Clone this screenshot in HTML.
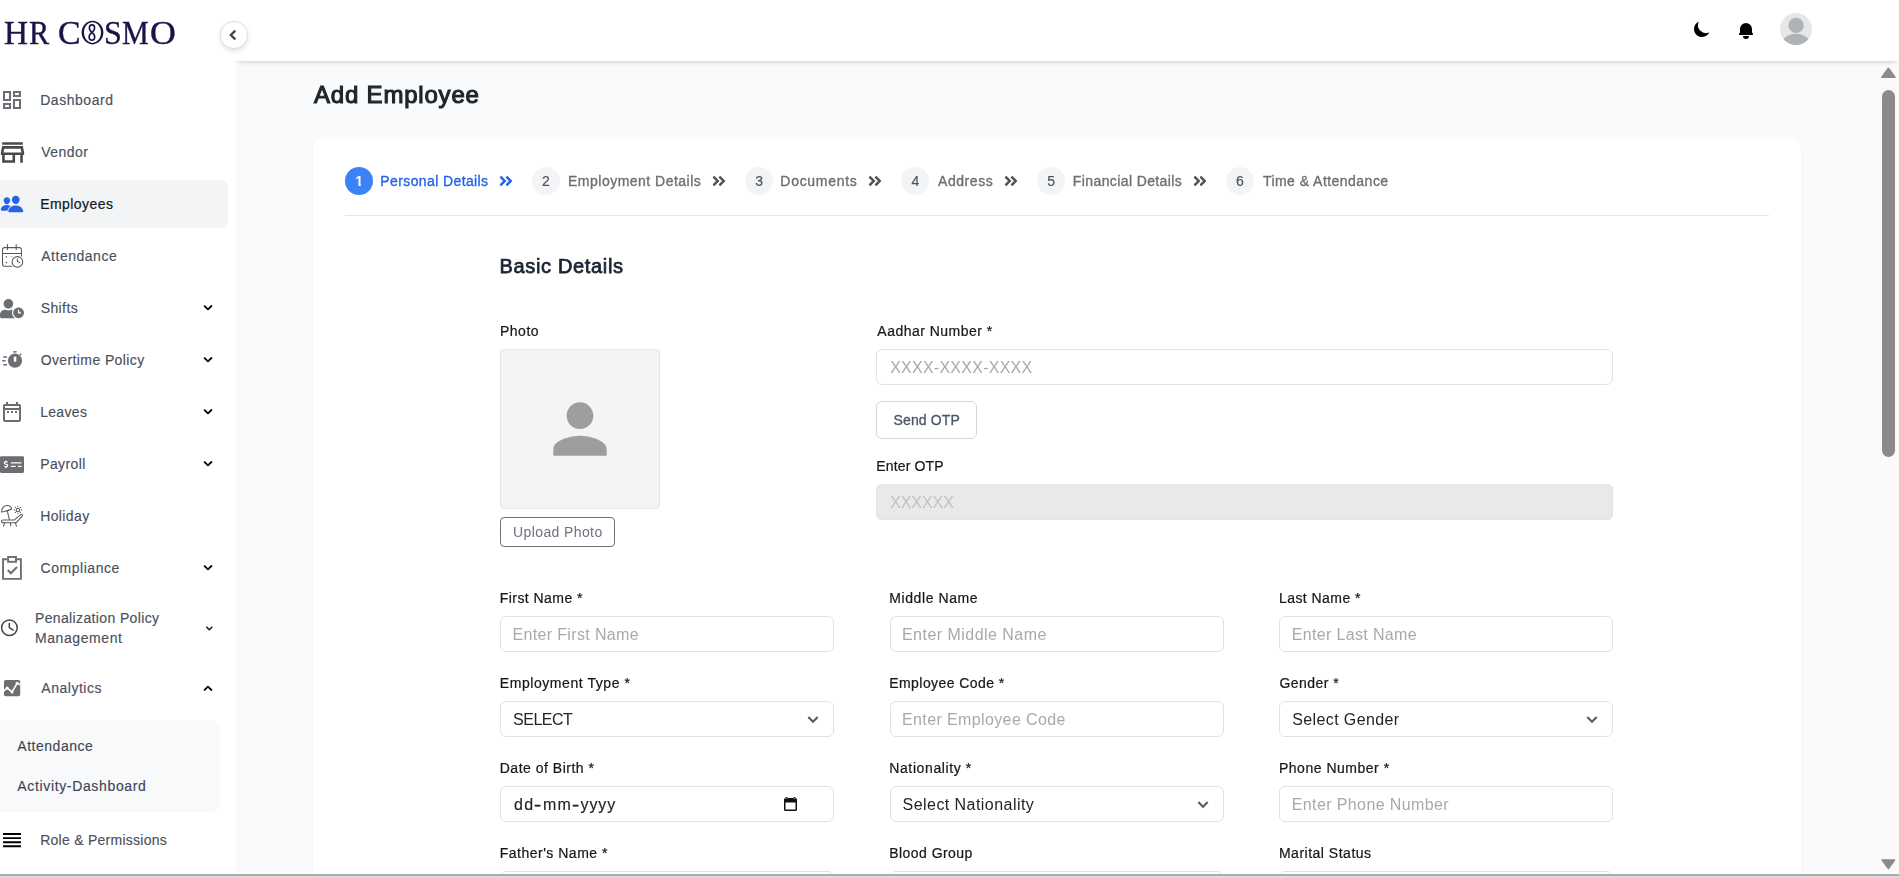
<!DOCTYPE html>
<html lang="en">
<head>
<meta charset="utf-8">
<title>Add Employee - HR Cosmo</title>
<style>
*{box-sizing:border-box;margin:0;padding:0}
html,body{width:1899px;height:878px;overflow:hidden;background:#fff}
body{font-family:"Liberation Sans",sans-serif;position:relative}
#app{position:absolute;left:0;top:0;width:1899px;height:878px;overflow:hidden;background:#fff}
.t{position:absolute;white-space:nowrap;display:block}
.abs{position:absolute}
svg{position:absolute;overflow:visible}
main{position:absolute;left:236px;top:0;width:1663px;height:873px;background:#f9fafb}
header{position:absolute;left:236px;top:0;width:1663px;height:61px;background:#fff;box-shadow:0 3px 5px -2px rgba(0,0,0,.15),0 2px 8px -4px rgba(0,0,0,.10)}
aside{position:absolute;left:0;top:0;width:236px;height:873px;background:#fff}
.card{position:absolute;left:313px;top:139px;width:1488px;height:760px;background:#fff;border-radius:8px;box-shadow:0 1px 3px rgba(0,0,0,.05)}
.navact{position:absolute;left:-10px;top:180px;width:238px;height:48px;background:#f3f4f6;border-radius:8px}
.submenu{position:absolute;left:-10px;top:720px;width:229.5px;height:92px;background:#f8f9fa;border-radius:9px}
.inp{position:absolute;height:36px;border:1px solid #dee2e6;border-radius:6px;background:#fff}
.stepc{position:absolute;width:28px;height:28px;border-radius:50%;top:167px;background:#f3f4f6}
.btn{position:absolute;border-radius:6px;background:#fff}
</style>
</head>
<body>
<div id="app">

<main></main>
<div id="content" style="position:absolute;left:0;top:0;width:1899px;height:873px;will-change:transform">
<section class="card"></section>
<span class="t" style="left:314.05px;top:81px;font-size:24px;line-height:27px;font-weight:400;color:#212529;letter-spacing:0.793px;-webkit-text-stroke:1.1px currentColor;">Add Employee</span>
<nav aria-label="steps">
<div class="stepc" style="left:345px;background:#3b82f6"></div>
<span class="t" style="left:355.32px;top:173px;font-size:14px;line-height:16px;font-weight:700;color:#fff;letter-spacing:0.000px;clip-path:polygon(0 0,100% 0,100% 10.600px,5.500px 10.600px,5.500px 100%,3.100px 100%,3.100px 10.600px,0 10.600px);">1</span>
<span class="t" style="left:380.35px;top:173px;font-size:14px;line-height:16px;font-weight:400;color:#2563eb;letter-spacing:0.388px;-webkit-text-stroke:0.35px currentColor;">Personal Details</span>
<svg style="left:499.0px;top:173px" width="14" height="16" viewBox="0 0 448 512"><path fill="#2563eb" d="M224.300 273l-136 136c-9.400 9.400-24.600 9.400-33.900 0l-22.600-22.600c-9.400-9.400-9.400-24.600 0-33.900l96.400-96.400-96.400-96.400c-9.400-9.400-9.400-24.600 0-33.900L54.300 103c9.400-9.400 24.600-9.400 33.900 0l136 136c9.500 9.400 9.500 24.600.1 34zm192-34l-136-136c-9.400-9.400-24.600-9.400-33.900 0l-22.600 22.600c-9.400 9.400-9.400 24.600 0 33.900l96.400 96.400-96.400 96.400c-9.400 9.400-9.400 24.600 0 33.900l22.600 22.600c9.400 9.400 24.600 9.400 33.900 0l136-136c9.400-9.200 9.400-24.400 0-33.800z"/></svg>
<div class="stepc" style="left:532px;"></div>
<span class="t" style="left:542.10px;top:173px;font-size:14px;line-height:16px;font-weight:400;color:#50545b;letter-spacing:0.000px;-webkit-text-stroke:0.2px currentColor;">2</span>
<span class="t" style="left:568.05px;top:173px;font-size:14px;line-height:16px;font-weight:400;color:#6d7076;letter-spacing:0.486px;-webkit-text-stroke:0.35px currentColor;">Employment Details</span>
<svg style="left:711.7px;top:173px" width="14" height="16" viewBox="0 0 448 512"><path fill="#50545b" d="M224.300 273l-136 136c-9.400 9.400-24.600 9.400-33.900 0l-22.600-22.600c-9.400-9.400-9.400-24.600 0-33.900l96.400-96.400-96.400-96.400c-9.400-9.400-9.400-24.600 0-33.900L54.300 103c9.400-9.400 24.600-9.400 33.900 0l136 136c9.500 9.400 9.500 24.600.1 34zm192-34l-136-136c-9.400-9.400-24.600-9.400-33.900 0l-22.600 22.600c-9.400 9.400-9.400 24.600 0 33.900l96.400 96.400-96.400 96.400c-9.400 9.400-9.400 24.600 0 33.900l22.600 22.600c9.400 9.400 24.600 9.400 33.900 0l136-136c9.400-9.200 9.400-24.400 0-33.800z"/></svg>
<div class="stepc" style="left:745px;"></div>
<span class="t" style="left:755.27px;top:173px;font-size:14px;line-height:16px;font-weight:400;color:#50545b;letter-spacing:0.000px;-webkit-text-stroke:0.2px currentColor;">3</span>
<span class="t" style="left:780.35px;top:173px;font-size:14px;line-height:16px;font-weight:400;color:#6d7076;letter-spacing:0.706px;-webkit-text-stroke:0.35px currentColor;">Documents</span>
<svg style="left:867.7px;top:173px" width="14" height="16" viewBox="0 0 448 512"><path fill="#50545b" d="M224.300 273l-136 136c-9.400 9.400-24.600 9.400-33.900 0l-22.600-22.600c-9.400-9.400-9.400-24.600 0-33.900l96.400-96.400-96.400-96.400c-9.400-9.400-9.400-24.600 0-33.900L54.300 103c9.400-9.400 24.600-9.400 33.900 0l136 136c9.500 9.400 9.500 24.600.1 34zm192-34l-136-136c-9.400-9.400-24.600-9.400-33.900 0l-22.600 22.600c-9.400 9.400-9.400 24.600 0 33.900l96.400 96.400-96.400 96.400c-9.400 9.400-9.400 24.600 0 33.900l22.600 22.600c9.400 9.400 24.600 9.400 33.900 0l136-136c9.400-9.200 9.400-24.400 0-33.800z"/></svg>
<div class="stepc" style="left:901px;"></div>
<span class="t" style="left:911.48px;top:173px;font-size:14px;line-height:16px;font-weight:400;color:#50545b;letter-spacing:0.000px;-webkit-text-stroke:0.2px currentColor;">4</span>
<span class="t" style="left:938.07px;top:173px;font-size:14px;line-height:16px;font-weight:400;color:#6d7076;letter-spacing:0.546px;-webkit-text-stroke:0.35px currentColor;">Address</span>
<svg style="left:1003.6px;top:173px" width="14" height="16" viewBox="0 0 448 512"><path fill="#50545b" d="M224.300 273l-136 136c-9.400 9.400-24.600 9.400-33.900 0l-22.600-22.600c-9.400-9.400-9.400-24.600 0-33.900l96.400-96.400-96.400-96.400c-9.400-9.400-9.400-24.600 0-33.900L54.300 103c9.400-9.400 24.600-9.400 33.900 0l136 136c9.500 9.400 9.500 24.600.1 34zm192-34l-136-136c-9.400-9.400-24.600-9.400-33.900 0l-22.600 22.600c-9.400 9.400-9.400 24.600 0 33.900l96.400 96.400-96.400 96.400c-9.400 9.400-9.400 24.600 0 33.900l22.600 22.600c9.400 9.400 24.600 9.400 33.900 0l136-136c9.400-9.200 9.400-24.400 0-33.800z"/></svg>
<div class="stepc" style="left:1037px;"></div>
<span class="t" style="left:1047.24px;top:173px;font-size:14px;line-height:16px;font-weight:400;color:#50545b;letter-spacing:0.000px;-webkit-text-stroke:0.2px currentColor;">5</span>
<span class="t" style="left:1072.85px;top:173px;font-size:14px;line-height:16px;font-weight:400;color:#6d7076;letter-spacing:0.390px;-webkit-text-stroke:0.35px currentColor;">Financial Details</span>
<svg style="left:1192.7px;top:173px" width="14" height="16" viewBox="0 0 448 512"><path fill="#50545b" d="M224.300 273l-136 136c-9.400 9.400-24.600 9.400-33.900 0l-22.600-22.600c-9.400-9.400-9.400-24.600 0-33.900l96.400-96.400-96.400-96.400c-9.400-9.400-9.400-24.600 0-33.900L54.300 103c9.400-9.400 24.600-9.400 33.900 0l136 136c9.500 9.400 9.500 24.600.1 34zm192-34l-136-136c-9.400-9.400-24.600-9.400-33.900 0l-22.600 22.600c-9.400 9.400-9.400 24.600 0 33.900l96.400 96.400-96.400 96.400c-9.400 9.400-9.400 24.600 0 33.900l22.600 22.600c9.400 9.400 24.600 9.400 33.900 0l136-136c9.400-9.200 9.400-24.400 0-33.800z"/></svg>
<div class="stepc" style="left:1226px;"></div>
<span class="t" style="left:1236.09px;top:173px;font-size:14px;line-height:16px;font-weight:400;color:#50545b;letter-spacing:0.000px;-webkit-text-stroke:0.2px currentColor;">6</span>
<span class="t" style="left:1262.89px;top:173px;font-size:14px;line-height:16px;font-weight:400;color:#6d7076;letter-spacing:0.468px;-webkit-text-stroke:0.35px currentColor;">Time &amp; Attendance</span>
</nav>
<div class="abs" style="left:345px;top:214.5px;width:1424px;height:1px;background:#e3e6ef"></div>
<span class="t" style="left:499.56px;top:255px;font-size:20px;line-height:22px;font-weight:400;color:#1b2434;letter-spacing:0.656px;-webkit-text-stroke:0.75px currentColor;">Basic Details</span>
<span class="t" style="left:499.95px;top:323px;font-size:14px;line-height:16px;font-weight:400;color:#16181d;letter-spacing:0.513px;-webkit-text-stroke:0.22px currentColor;">Photo</span>
<div class="abs" style="left:500px;top:349px;width:160px;height:160px;background:#f3f4f6;border:1px solid #e5e7eb;border-radius:4px"></div>
<svg style="left:540px;top:388.7px" width="80" height="80" viewBox="0 0 24 24"><path fill="#9e9e9e" d="M12 12c2.210 0 4-1.790 4-4s-1.790-4-4-4-4 1.790-4 4 1.790 4 4 4zm0 2c-2.670 0-8 1.340-8 4v2h16v-2c0-2.660-5.330-4-8-4z"/></svg>
<div class="btn" style="left:500px;top:517px;width:115px;height:30px;border:1px solid #6c7078;border-radius:4px"></div>
<span class="t" style="left:513.02px;top:524px;font-size:14px;line-height:16px;font-weight:400;color:#6b7280;letter-spacing:0.393px;">Upload Photo</span>
<span class="t" style="left:877.37px;top:323px;font-size:14px;line-height:16px;font-weight:400;color:#16181d;letter-spacing:0.477px;-webkit-text-stroke:0.22px currentColor;">Aadhar Number *</span>
<div class="inp" style="left:876px;top:349px;width:737px"></div>
<span class="t" style="left:890.14px;top:359px;font-size:16px;line-height:17px;font-weight:400;color:#a7a9ac;letter-spacing:0.260px;">XXXX-XXXX-XXXX</span>
<div class="btn" style="left:876px;top:401px;width:101px;height:38px;border:1px solid #d1d5db"></div>
<span class="t" style="left:893.56px;top:412px;font-size:14px;line-height:16px;font-weight:400;color:#4b5563;letter-spacing:0.130px;-webkit-text-stroke:0.3px currentColor;">Send OTP</span>
<span class="t" style="left:876.25px;top:458px;font-size:14px;line-height:16px;font-weight:400;color:#16181d;letter-spacing:0.144px;-webkit-text-stroke:0.22px currentColor;">Enter OTP</span>
<div class="inp" style="left:876px;top:484px;width:737px;height:36px;background:#e9e9e9;border-color:#e4e4e4;border-radius:5px"></div>
<span class="t" style="left:890.14px;top:494px;font-size:16px;line-height:17px;font-weight:400;color:#c2c2c2;letter-spacing:-0.047px;">XXXXXX</span>
<span class="t" style="left:499.75px;top:590px;font-size:14px;line-height:16px;font-weight:400;color:#16181d;letter-spacing:0.444px;-webkit-text-stroke:0.22px currentColor;">First Name *</span>
<div class="inp" style="left:500px;top:616px;width:334px"></div>
<span class="t" style="left:512.49px;top:626px;font-size:16px;line-height:17px;font-weight:400;color:#a7a9ac;letter-spacing:0.347px;">Enter First Name</span>
<span class="t" style="left:889.25px;top:590px;font-size:14px;line-height:16px;font-weight:400;color:#16181d;letter-spacing:0.589px;-webkit-text-stroke:0.22px currentColor;">Middle Name</span>
<div class="inp" style="left:889.5px;top:616px;width:334px"></div>
<span class="t" style="left:901.99px;top:626px;font-size:16px;line-height:17px;font-weight:400;color:#a7a9ac;letter-spacing:0.467px;">Enter Middle Name</span>
<span class="t" style="left:1278.95px;top:590px;font-size:14px;line-height:16px;font-weight:400;color:#16181d;letter-spacing:0.443px;-webkit-text-stroke:0.22px currentColor;">Last Name *</span>
<div class="inp" style="left:1279.2px;top:616px;width:334px"></div>
<span class="t" style="left:1291.69px;top:626px;font-size:16px;line-height:17px;font-weight:400;color:#a7a9ac;letter-spacing:0.348px;">Enter Last Name</span>
<span class="t" style="left:499.75px;top:675px;font-size:14px;line-height:16px;font-weight:400;color:#16181d;letter-spacing:0.568px;-webkit-text-stroke:0.22px currentColor;">Employment Type *</span>
<div class="inp" style="left:500px;top:701px;width:334px"></div>
<span class="t" style="left:513.07px;top:711px;font-size:16px;line-height:17px;font-weight:400;color:#212529;letter-spacing:-0.510px;">SELECT</span>
<svg style="left:807px;top:715.2px" width="12" height="9" viewBox="0 0 12 9"><path d="M1.300 1.900l4.700 4.900 4.700-4.900" fill="none" stroke="#565d6b" stroke-width="2.100" stroke-linecap="butt" stroke-linejoin="miter"/></svg>
<span class="t" style="left:889.25px;top:675px;font-size:14px;line-height:16px;font-weight:400;color:#16181d;letter-spacing:0.437px;-webkit-text-stroke:0.22px currentColor;">Employee Code *</span>
<div class="inp" style="left:889.5px;top:701px;width:334px"></div>
<span class="t" style="left:901.99px;top:711px;font-size:16px;line-height:17px;font-weight:400;color:#a7a9ac;letter-spacing:0.383px;">Enter Employee Code</span>
<span class="t" style="left:1279.40px;top:675px;font-size:14px;line-height:16px;font-weight:400;color:#16181d;letter-spacing:0.456px;-webkit-text-stroke:0.22px currentColor;">Gender *</span>
<div class="inp" style="left:1279.2px;top:701px;width:334px"></div>
<span class="t" style="left:1292.27px;top:711px;font-size:16px;line-height:17px;font-weight:400;color:#212529;letter-spacing:0.384px;">Select Gender</span>
<svg style="left:1586.2px;top:715.2px" width="12" height="9" viewBox="0 0 12 9"><path d="M1.300 1.900l4.700 4.900 4.700-4.900" fill="none" stroke="#565d6b" stroke-width="2.100" stroke-linecap="butt" stroke-linejoin="miter"/></svg>
<span class="t" style="left:499.75px;top:760px;font-size:14px;line-height:16px;font-weight:400;color:#16181d;letter-spacing:0.508px;-webkit-text-stroke:0.22px currentColor;">Date of Birth *</span>
<div class="inp" style="left:500px;top:786px;width:334px"></div>
<div class="datetext">
<span class="t" style="left:513.93px;top:796px;font-size:16px;line-height:17px;font-weight:400;color:#212529;letter-spacing:1.406px;-webkit-text-stroke:0.15px currentColor;">dd</span>
<span class="t" style="left:534.45px;top:796px;font-size:16px;line-height:17px;font-weight:400;color:#212529;letter-spacing:0.000px;-webkit-text-stroke:0.45px currentColor;transform:scaleX(1.3312);transform-origin:0 0;">-</span>
<span class="t" style="left:542.94px;top:796px;font-size:16px;line-height:17px;font-weight:400;color:#212529;letter-spacing:1.161px;-webkit-text-stroke:0.15px currentColor;">mm</span>
<span class="t" style="left:571.75px;top:796px;font-size:16px;line-height:17px;font-weight:400;color:#212529;letter-spacing:0.000px;-webkit-text-stroke:0.45px currentColor;transform:scaleX(1.3312);transform-origin:0 0;">-</span>
<span class="t" style="left:580.56px;top:796px;font-size:16px;line-height:17px;font-weight:400;color:#212529;letter-spacing:0.890px;-webkit-text-stroke:0.15px currentColor;">yyyy</span>
</div>
<svg style="left:784.4px;top:796.8px" width="13" height="14" viewBox="0 0 13 14"><path d="M1.500 1h10a1.500 1.500 0 0 1 1.500 1.500v10a1.500 1.500 0 0 1-1.500 1.500h-10a1.500 1.500 0 0 1-1.500-1.500v-10a1.500 1.500 0 0 1 1.500-1.500zM1.500 5.400v7.100h10V5.400zM1.700 0h1.700v1.500H1.700zM9.600 0h1.700v1.500H9.600z" fill="#111" fill-rule="evenodd"/></svg>
<span class="t" style="left:889.25px;top:760px;font-size:14px;line-height:16px;font-weight:400;color:#16181d;letter-spacing:0.614px;-webkit-text-stroke:0.22px currentColor;">Nationality *</span>
<div class="inp" style="left:889.5px;top:786px;width:334px"></div>
<span class="t" style="left:902.57px;top:796px;font-size:16px;line-height:17px;font-weight:400;color:#212529;letter-spacing:0.449px;">Select Nationality</span>
<svg style="left:1196.5px;top:800.2px" width="12" height="9" viewBox="0 0 12 9"><path d="M1.300 1.900l4.700 4.900 4.700-4.900" fill="none" stroke="#565d6b" stroke-width="2.100" stroke-linecap="butt" stroke-linejoin="miter"/></svg>
<span class="t" style="left:1278.95px;top:760px;font-size:14px;line-height:16px;font-weight:400;color:#16181d;letter-spacing:0.513px;-webkit-text-stroke:0.22px currentColor;">Phone Number *</span>
<div class="inp" style="left:1279.2px;top:786px;width:334px"></div>
<span class="t" style="left:1291.69px;top:796px;font-size:16px;line-height:17px;font-weight:400;color:#a7a9ac;letter-spacing:0.393px;">Enter Phone Number</span>
<span class="t" style="left:499.75px;top:845px;font-size:14px;line-height:16px;font-weight:400;color:#16181d;letter-spacing:0.497px;-webkit-text-stroke:0.22px currentColor;">Father&#x27;s Name *</span>
<div class="inp" style="left:500px;top:871px;width:334px"></div>
<span class="t" style="left:889.25px;top:845px;font-size:14px;line-height:16px;font-weight:400;color:#16181d;letter-spacing:0.453px;-webkit-text-stroke:0.22px currentColor;">Blood Group</span>
<div class="inp" style="left:889.5px;top:871px;width:334px"></div>
<span class="t" style="left:1278.95px;top:845px;font-size:14px;line-height:16px;font-weight:400;color:#16181d;letter-spacing:0.505px;-webkit-text-stroke:0.22px currentColor;">Marital Status</span>
<div class="inp" style="left:1279.2px;top:871px;width:334px"></div>
</div>
<div class="abs" style="left:1877px;top:61px;width:22px;height:812px;background:#fafafb"></div>
<svg style="left:1880px;top:66px" width="17" height="13" viewBox="0 0 17 13"><path d="M8.400 2.300L14.900 11.300H1.900z" fill="#8b8b8b" stroke="#8b8b8b" stroke-width="1.6" stroke-linejoin="round"/></svg>
<div class="abs" style="left:1882px;top:90px;width:13px;height:367px;border-radius:6.5px;background:#8b8b8b"></div>
<svg style="left:1880px;top:858px" width="17" height="13" viewBox="0 0 17 13"><path d="M2.200 2L14.600 2L8.400 10.400z" fill="#8b8b8b" stroke="#8b8b8b" stroke-width="1.6" stroke-linejoin="round"/></svg>
<header></header>
<svg style="left:1691.900px;top:19.150px" width="20" height="20" viewBox="0 0 20 20"><path fill="#000" d="M17.293 13.293A8 8 0 016.707 2.707a8.001 8.001 0 1010.586 10.586z"/></svg>
<svg style="left:1736px;top:20.950px" width="20" height="20" viewBox="0 0 20 20"><path fill="#000" d="M10 2a6 6 0 00-6 6v3.586l-.707.707A1 1 0 004 14h12a1 1 0 00.707-1.707L16 11.586V8a6 6 0 00-6-6zM10 18a3 3 0 01-3-3h6a3 3 0 01-3 3z"/></svg>
<svg style="left:1780px;top:13px" width="32" height="32" viewBox="0 0 32 32"><defs><clipPath id="av"><circle cx="16" cy="16" r="16"/></clipPath></defs><circle cx="16" cy="16" r="16" fill="#e5e6e8"/><g clip-path="url(#av)" fill="#aeb3b7"><circle cx="16.100" cy="12.400" r="7.700"/><ellipse cx="16" cy="33" rx="15" ry="12.200"/></g></svg>
<aside></aside>
<div class="navact"></div>
<div class="submenu"></div>
<div id="logo" role="img" aria-label="HR COSMO" title="HR COSMO" style="position:absolute;left:0;top:0;width:200px;height:60px;will-change:transform;font-size:0">
<span class="t" style="left:3.64px;top:14px;font-size:33.6px;line-height:37px;font-weight:400;color:#1a1446;letter-spacing:0.000px;font-family:'Liberation Serif',serif;-webkit-text-stroke:0.4px #1a1446;transform:scaleX(0.9912);transform-origin:0 0;">H</span>
<span class="t" style="left:28.63px;top:14px;font-size:33.6px;line-height:37px;font-weight:400;color:#1a1446;letter-spacing:0.000px;font-family:'Liberation Serif',serif;-webkit-text-stroke:0.4px #1a1446;transform:scaleX(0.9027);transform-origin:0 0;">R</span> 
<span class="t" style="left:58.01px;top:14px;font-size:33.6px;line-height:37px;font-weight:400;color:#1a1446;letter-spacing:0.000px;font-family:'Liberation Serif',serif;-webkit-text-stroke:0.4px #1a1446;transform:scaleX(1.0071);transform-origin:0 0;">C</span>
<span class="t" style="left:104.25px;top:14px;font-size:33.6px;line-height:37px;font-weight:400;color:#1a1446;letter-spacing:0.000px;font-family:'Liberation Serif',serif;-webkit-text-stroke:0.4px #1a1446;transform:scaleX(0.9551);transform-origin:0 0;">S</span>
<span class="t" style="left:121.93px;top:14px;font-size:33.6px;line-height:37px;font-weight:400;color:#1a1446;letter-spacing:0.000px;font-family:'Liberation Serif',serif;-webkit-text-stroke:0.4px #1a1446;transform:scaleX(0.8959);transform-origin:0 0;">M</span>
<span class="t" style="left:149.83px;top:14px;font-size:33.6px;line-height:37px;font-weight:400;color:#1a1446;letter-spacing:0.000px;font-family:'Liberation Serif',serif;-webkit-text-stroke:0.4px #1a1446;transform:scaleX(1.0655);transform-origin:0 0;">O</span>
<svg style="left:80px;top:20px" width="25" height="26" viewBox="0 0 25 26"><path fill="#1a1446" fill-rule="evenodd" d="M12.500 0.800c6 0 10.900 5.300 10.900 11.800s-4.900 11.800-10.900 11.800S1.600 19.100 1.600 12.600 6.500 0.800 12.500 0.800zm0 1.500c-4.700 0-8.500 4.600-8.500 10.300s3.800 10.300 8.500 10.300 8.500-4.600 8.500-10.300S17.200 2.300 12.500 2.300z"/><path d="M11.900 12.400C8.100 9.700 8.900 4.900 12 4.900c3.100 0 3.800 4.700-.1 7.500-3.900 2.800-3.500 7.800 0 7.800 3.600 0 3.900-5 0-7.800z" fill="none" stroke="#1a1446" stroke-width="1.600"/></svg>
</div>
<div class="abs" style="left:220px;top:21px;width:28px;height:28px;border-radius:50%;background:#fff;border:1px solid #dcdfe3;box-shadow:0 2px 5px rgba(0,0,0,.12)"></div>
<svg style="left:228px;top:29px" width="10" height="12" viewBox="0 0 10 12"><path d="M6.600 2.300L2.700 6l3.900 3.700" fill="none" stroke="#3f444a" stroke-width="2.400" stroke-linecap="round" stroke-linejoin="round"/></svg>
<nav aria-label="sidebar">
<span class="t" style="left:40.15px;top:92px;font-size:14px;line-height:16px;font-weight:400;color:#4a505c;letter-spacing:0.545px;-webkit-text-stroke:0.15px currentColor;">Dashboard</span>
<span class="t" style="left:41.24px;top:144px;font-size:14px;line-height:16px;font-weight:400;color:#4a505c;letter-spacing:0.484px;-webkit-text-stroke:0.15px currentColor;">Vendor</span>
<span class="t" style="left:40.15px;top:196px;font-size:14px;line-height:16px;font-weight:400;color:#111827;letter-spacing:0.437px;-webkit-text-stroke:0.2px currentColor;">Employees</span>
<span class="t" style="left:41.27px;top:248px;font-size:14px;line-height:16px;font-weight:400;color:#4a505c;letter-spacing:0.513px;-webkit-text-stroke:0.15px currentColor;">Attendance</span>
<span class="t" style="left:40.66px;top:300px;font-size:14px;line-height:16px;font-weight:400;color:#4a505c;letter-spacing:0.406px;-webkit-text-stroke:0.15px currentColor;">Shifts</span>
<span class="t" style="left:40.64px;top:352px;font-size:14px;line-height:16px;font-weight:400;color:#4a505c;letter-spacing:0.398px;-webkit-text-stroke:0.15px currentColor;">Overtime Policy</span>
<span class="t" style="left:40.15px;top:404px;font-size:14px;line-height:16px;font-weight:400;color:#4a505c;letter-spacing:0.322px;-webkit-text-stroke:0.15px currentColor;">Leaves</span>
<span class="t" style="left:40.15px;top:456px;font-size:14px;line-height:16px;font-weight:400;color:#4a505c;letter-spacing:0.399px;-webkit-text-stroke:0.15px currentColor;">Payroll</span>
<span class="t" style="left:40.15px;top:508px;font-size:14px;line-height:16px;font-weight:400;color:#4a505c;letter-spacing:0.398px;-webkit-text-stroke:0.15px currentColor;">Holiday</span>
<span class="t" style="left:40.59px;top:560px;font-size:14px;line-height:16px;font-weight:400;color:#4a505c;letter-spacing:0.534px;-webkit-text-stroke:0.15px currentColor;">Compliance</span>
<span class="t" style="left:34.95px;top:610px;font-size:14px;line-height:16px;font-weight:400;color:#4a505c;letter-spacing:0.370px;-webkit-text-stroke:0.15px currentColor;">Penalization Policy</span>
<span class="t" style="left:34.95px;top:630px;font-size:14px;line-height:16px;font-weight:400;color:#4a505c;letter-spacing:0.582px;-webkit-text-stroke:0.15px currentColor;">Management</span>
<span class="t" style="left:41.27px;top:680px;font-size:14px;line-height:16px;font-weight:400;color:#4a505c;letter-spacing:0.527px;-webkit-text-stroke:0.15px currentColor;">Analytics</span>
<span class="t" style="left:17.27px;top:738px;font-size:14px;line-height:16px;font-weight:400;color:#3f4654;letter-spacing:0.524px;-webkit-text-stroke:0.15px currentColor;">Attendance</span>
<span class="t" style="left:17.27px;top:778px;font-size:14px;line-height:16px;font-weight:400;color:#3f4654;letter-spacing:0.655px;-webkit-text-stroke:0.15px currentColor;">Activity-Dashboard</span>
<span class="t" style="left:40.15px;top:832px;font-size:14px;line-height:16px;font-weight:400;color:#4a505c;letter-spacing:0.265px;-webkit-text-stroke:0.15px currentColor;">Role &amp; Permissions</span>
</nav>
<svg style="left:203px;top:304px" width="10" height="8" viewBox="0 0 10 8"><path d="M1.600 2.100l3.350 3.200L8.400 2" fill="none" stroke="#000" stroke-width="1.800" stroke-linecap="round" stroke-linejoin="round"/></svg>
<svg style="left:203px;top:356px" width="10" height="8" viewBox="0 0 10 8"><path d="M1.600 2.100l3.350 3.200L8.400 2" fill="none" stroke="#000" stroke-width="1.800" stroke-linecap="round" stroke-linejoin="round"/></svg>
<svg style="left:203px;top:408px" width="10" height="8" viewBox="0 0 10 8"><path d="M1.600 2.100l3.350 3.200L8.400 2" fill="none" stroke="#000" stroke-width="1.800" stroke-linecap="round" stroke-linejoin="round"/></svg>
<svg style="left:203px;top:460px" width="10" height="8" viewBox="0 0 10 8"><path d="M1.600 2.100l3.350 3.200L8.400 2" fill="none" stroke="#000" stroke-width="1.800" stroke-linecap="round" stroke-linejoin="round"/></svg>
<svg style="left:203px;top:564px" width="10" height="8" viewBox="0 0 10 8"><path d="M1.600 2.100l3.350 3.200L8.400 2" fill="none" stroke="#000" stroke-width="1.800" stroke-linecap="round" stroke-linejoin="round"/></svg>
<svg style="left:204.500px;top:624.500px" width="9" height="7" viewBox="0 0 9 7"><path d="M1.300 1.800l3 2.900 3-2.900" fill="none" stroke="#111" stroke-width="1.400"/></svg>
<svg style="left:203px;top:684px" width="10" height="8" viewBox="0 0 10 8"><path d="M1.600 5.900l3.350-3.200L8.400 6" fill="none" stroke="#000" stroke-width="1.800" stroke-linecap="round" stroke-linejoin="round"/></svg>
<svg style="left:0;top:88px" width="24" height="24" viewBox="0 0 24 24"><path fill="#6b6e73" d="M19 5v2h-4V5h4M9 5v6H5V5h4m10 8v6h-4v-6h4M9 17v2H5v-2h4M21 3h-8v6h8V3zM11 3H3v10h8V3zm10 8h-8v10h8V11zm-10 4H3v6h8v-6z"/></svg>
<svg style="left:-3.300px;top:136.600px" width="31" height="31" viewBox="0 0 24 24"><path fill="#4a4a4a" d="M18.360 9l.6 3H5.040l.6-3h12.720M20 4H4v2h16V4zm0 3H4l-1 5v2h1v6h10v-6h4v6h2v-6h1v-2l-1-5zM6 18v-4h6v4H6z"/></svg>
<svg style="left:0;top:192px" width="24" height="24" viewBox="0 0 512 512"><path fill="#2563eb" d="M336 256c-20.560 0-40.440-9.180-56-25.840-15.130-16.250-24.370-37.920-26-61-1.740-24.620 5.770-47.260 21.140-63.760S312 80 336 80c23.830 0 45.380 9.060 60.700 25.520 15.470 16.620 23 39.220 21.260 63.630-1.670 23.110-10.900 44.770-26 61C376.440 246.820 356.570 256 336 256zm131.830 176H204.180a27.710 27.710 0 0 1-22-10.670 30.220 30.220 0 0 1-5.260-25.790c8.420-33.810 29.280-61.850 60.320-81.080C264.790 297.400 299.860 288 336 288c36.850 0 71 9 98.710 26.050 31.110 19.130 52 47.330 60.380 81.550a30.270 30.270 0 0 1-5.320 25.780A27.680 27.680 0 0 1 467.830 432zM147 260c-35.190 0-66.130-32.720-69-72.930-1.420-20.600 5-39.650 18-53.620 12.860-13.830 31-21.450 51-21.450s38 7.660 50.930 21.570c13.100 14.080 19.500 33.090 18 53.520-2.870 40.200-33.800 72.910-68.930 72.910zm65.660 31.450c-17.590-8.600-40.420-12.900-65.650-12.900-29.460 0-58.070 7.680-80.570 21.620-25.510 15.830-42.670 38.880-49.600 66.710a27.390 27.390 0 0 0 4.790 23.360A25.320 25.320 0 0 0 41.720 400h111a8 8 0 0 0 7.870-6.570c.11-.63.25-1.260.41-1.880 8.480-34.060 28.350-62.840 57.710-83.820a8 8 0 0 0-.63-13.390c-1.570-.92-3.370-1.890-5.420-2.890z"/></svg>
<svg style="left:0;top:242px" width="26" height="28" viewBox="0 0 26 28"><g fill="none" stroke="#585858" stroke-width="1.050" stroke-linecap="round"><path d="M11.800 24.300H4.500a2 2 0 0 1-2-2V7.600a2 2 0 0 1 2-2h14.900a2 2 0 0 1 2 2V14"/><path d="M2.500 11.500h18.900M7.500 2.600v5M16.200 2.600v5"/><circle cx="17.400" cy="19.900" r="5.300"/><path d="M17.400 16.700v2.700l2.400 1.200"/></g><g fill="#585858"><circle cx="6.400" cy="14.700" r=".75"/><circle cx="11.800" cy="14.700" r=".55"/><circle cx="6.400" cy="20.500" r=".75"/></g></svg>
<svg style="left:0;top:298.600px" width="24" height="19.200" viewBox="0 0 640 512"><path fill="#6b6e73" d="M496 224c-79.600 0-144 64.400-144 144s64.400 144 144 144 144-64.400 144-144-64.400-144-144-144zm64 150.300c0 5.300-4.400 9.700-9.700 9.700h-60.600c-5.300 0-9.700-4.400-9.700-9.700v-76.600c0-5.300 4.400-9.700 9.700-9.700h12.600c5.300 0 9.700 4.400 9.700 9.700V352h38.300c5.300 0 9.700 4.400 9.700 9.700v12.600zM320 368c0-27.800 6.700-54.100 18.200-77.500-8-1.500-16.200-2.500-24.600-2.500h-16.700c-22.200 10.200-46.900 16-72.900 16s-50.600-5.800-72.900-16h-16.700C60.200 288 0 348.200 0 422.400V464c0 26.500 21.500 48 48 48h347.100c-45.300-31.900-75.100-84.500-75.100-144zm-96-112c70.700 0 128-57.300 128-128S294.700 0 224 0 96 57.300 96 128s57.300 128 128 128z"/></svg>
<svg style="left:0;top:348px" width="24" height="22" viewBox="0 0 24 22"><circle cx="15" cy="12.650" r="7.100" fill="#6b6e73"/><rect x="13.100" y="3.100" width="3.600" height="1.500" fill="#6b6e73"/><path d="M19.600 7.500l1.600-1.800" stroke="#6b6e73" stroke-width="1.300" fill="none"/><rect x="13.800" y="8.600" width="2.500" height="5.100" fill="#fff"/><path d="M3.300 9.100h3.700M2.300 12.700h3.300M3.300 16.800h3.700" stroke="#6b6e73" stroke-width="1.500" fill="none"/></svg>
<svg style="left:0;top:399.800px" width="24" height="24" viewBox="0 0 24 24"><path fill="#6b6e73" d="M7 11h2v2H7v-2zm14-5v14c0 1.100-.9 2-2 2H5c-1.110 0-2-.9-2-2l.01-14c0-1.100.88-2 1.990-2h1V2h2v2h8V2h2v2h1c1.100 0 2 .9 2 2zM5 8h14V6H5v2zm14 12V10H5v10h14zm-4-7h2v-2h-2v2zm-4 0h2v-2h-2v2z"/></svg>
<svg style="left:0;top:454.800px" width="24" height="19.200" viewBox="0 0 640 512"><path fill="#6b6e73" d="M608 32H32C14.330 32 0 46.330 0 64v384c0 17.670 14.330 32 32 32h576c17.670 0 32-14.330 32-32V64c0-17.670-14.330-32-32-32zM176 327.880V344c0 4.420-3.580 8-8 8h-16c-4.420 0-8-3.580-8-8v-16.290c-11.290-.58-22.270-4.520-31.370-11.350-3.900-2.930-4.100-8.770-.57-12.140l11.750-11.210c2.770-2.640 6.890-2.760 10.130-.73 3.870 2.420 8.260 3.720 12.820 3.720h28.110c6.500 0 11.800-5.920 11.800-13.190 0-5.950-3.610-11.190-8.770-12.730l-45-13.500c-18.590-5.580-31.580-23.420-31.580-43.390 0-24.520 19.050-44.440 42.670-45.070V152c0-4.420 3.580-8 8-8h16c4.420 0 8 3.580 8 8v16.290c11.290.58 22.270 4.510 31.370 11.350 3.900 2.930 4.100 8.770.57 12.140l-11.750 11.210c-2.770 2.640-6.890 2.760-10.130.73-3.870-2.430-8.260-3.720-12.820-3.720h-28.110c-6.500 0-11.800 5.920-11.800 13.190 0 5.950 3.610 11.190 8.770 12.730l45 13.500c18.590 5.580 31.580 23.420 31.580 43.390 0 24.530-19.050 44.440-42.670 45.070zM416 312c0 4.420-3.580 8-8 8H296c-4.420 0-8-3.580-8-8v-16c0-4.420 3.580-8 8-8h112c4.420 0 8 3.580 8 8v16zm160 0c0 4.420-3.580 8-8 8h-80c-4.420 0-8-3.580-8-8v-16c0-4.420 3.580-8 8-8h80c4.420 0 8 3.580 8 8v16zm0-96c0 4.420-3.580 8-8 8H296c-4.420 0-8-3.580-8-8v-16c0-4.420 3.580-8 8-8h272c4.420 0 8 3.580 8 8v16z"/></svg>
<svg style="left:0;top:500px" width="24" height="30" viewBox="0 0 24 30"><g fill="none" stroke="#585858" stroke-width="1.050" stroke-linecap="round" stroke-linejoin="round"><path d="M1.700 12.100C1.300 8.600 3.600 5.800 6.600 5.500c2.600-.2 4.600 1.400 5.100 3.600-3.200 1.500-6.600 2.500-10 3z"/><path d="M7.300 10.900l2 8.600"/><path d="M2.900 19.900h11.700l6-5.300c1.100-.8 2.500.5 1.600 1.500l-6.100 6.700H2.900c-1.900 0-1.900-2.900 0-2.900z"/><path d="M4.400 23.200l-.9 2.900M10.400 23.200l.4 2.700M15.300 23.200l1.300 2.900"/><circle cx="17.900" cy="9.900" r="1.750"/></g><g fill="#585858"><circle cx="17.900" cy="6.300" r=".6"/><circle cx="17.900" cy="13.500" r=".6"/><circle cx="14.300" cy="9.900" r=".6"/><circle cx="21.500" cy="9.900" r=".6"/><circle cx="15.400" cy="7.400" r=".65"/><circle cx="20.400" cy="7.400" r=".65"/><circle cx="15.400" cy="12.400" r=".65"/><circle cx="20.400" cy="12.400" r=".65"/></g></svg>
<svg style="left:0;top:555px" width="24" height="26" viewBox="0 0 24 26"><g fill="none" stroke="#6b6e73" stroke-width="1.900"><path d="M7.200 4.200H3v19.700h17.900V4.200H16.800"/><rect x="8.100" y="2" width="7.900" height="4.800"/><path d="M7.800 15l3.100 3.200 6.100-6.200" stroke-width="2"/></g></svg>
<svg style="left:0;top:618px" width="20" height="20" viewBox="0 0 20 20"><circle cx="9.400" cy="9.800" r="7.800" fill="none" stroke="#454545" stroke-width="1.500"/><path d="M9.300 5.400v4.300l3.800 2.500" fill="none" stroke="#454545" stroke-width="1.500" stroke-linecap="round" stroke-linejoin="round"/></svg>
<svg style="left:3.800px;top:680px" width="17" height="17" viewBox="0 0 17 17"><defs><clipPath id="an"><rect x="0" y="0" width="16.200" height="16.200" rx="1.600"/></clipPath></defs><rect x="0" y="0" width="16.200" height="16.200" rx="1.600" fill="#6b6e73"/><g clip-path="url(#an)"><path d="M-1 11.500l4.100-3.500 4.950 3.900 5.100-8.600 4 1.700" fill="none" stroke="#fff" stroke-width="1.600" stroke-linejoin="round"/></g><circle cx="3.100" cy="8" r="1.500" fill="#fff"/><circle cx="8.050" cy="11.900" r="1.500" fill="#fff"/><circle cx="13.150" cy="3.300" r="1.500" fill="#fff"/></svg>
<svg style="left:3px;top:832.800px" width="18" height="15" viewBox="0 0 18 15"><path d="M0 1h18M0 5.100h18M0 9.200h18M0 13.300h18" stroke="#000" stroke-width="1.900" fill="none"/></svg>
<div class="abs" style="left:0;top:873px;width:1899px;height:1px;background:#fff"></div>
<div class="abs" style="left:0;top:874px;width:1899px;height:2px;background:#ababab"></div>
<div class="abs" style="left:0;top:876px;width:1899px;height:2px;background:#dcdcdc"></div>
</div>
</body>
</html>
